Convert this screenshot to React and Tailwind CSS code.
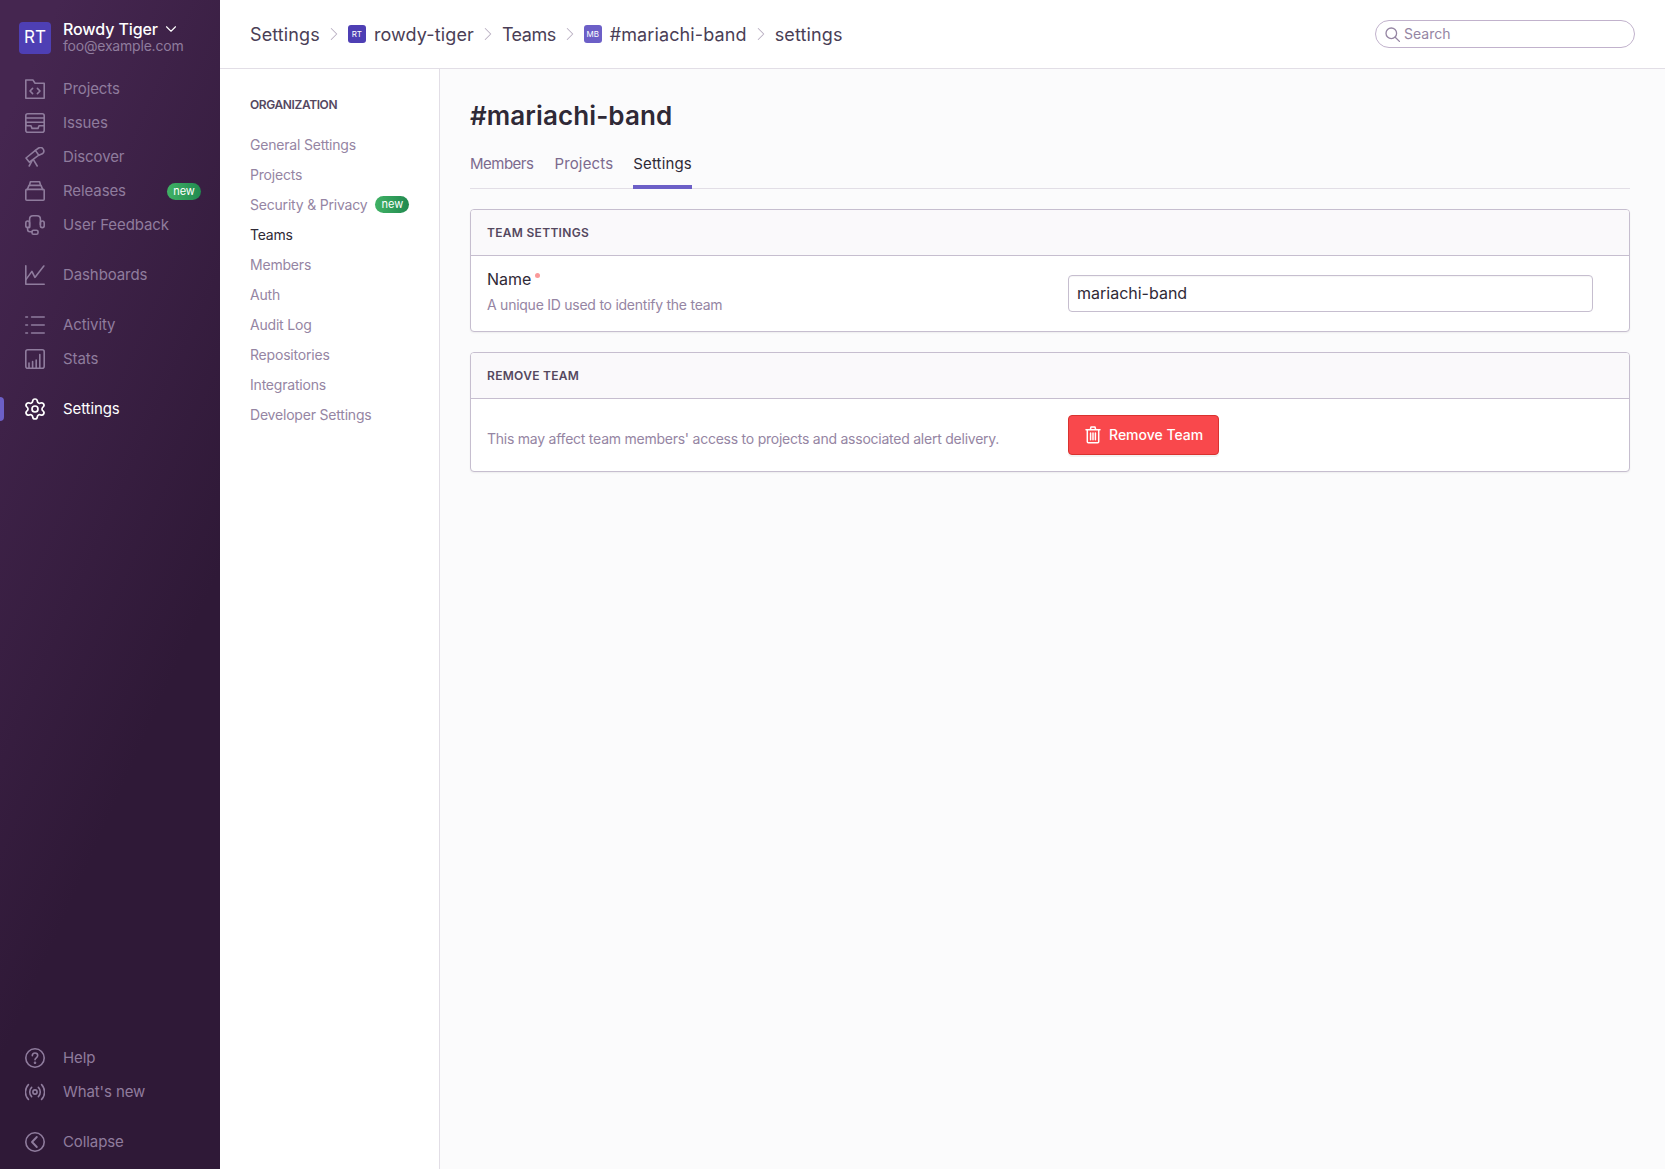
import React from 'react';
import { ChevronDown, ChevronRight, Settings } from 'lucide-react';

const ic = { width: 20, height: 20, viewBox: '0 0 20 20', fill: 'none', stroke: 'currentColor', strokeWidth: 1.6, strokeLinecap: 'round', strokeLinejoin: 'round' };

function ProjectsIcon() {
  return (
    <svg {...ic}>
      <path d="M.8 1h7.100l2.200 3.200h9.100v15H.8z" />
      <path d="M7.600 9.400 5 12l2.600 2.600M12.400 9.400 15 12l-2.600 2.600" />
    </svg>
  );
}
function IssuesIcon() {
  return (
    <svg {...ic}>
      <rect x=".8" y=".8" width="18.400" height="18.400" rx="2" />
      <path d="M.8 5h18.400M.8 9.200h18.400" />
      <path d="M.8 9.200v3.600h5.200l1 2.600h6l1-2.600h5.200" />
    </svg>
  );
}
function DiscoverIcon() {
  return (
    <svg {...ic}>
      <path d="m1 11 9.400-7.600 3.400 4.800-9.400 7z" />
      <path d="m10.400 3.400 3.200-2.400c1.600-1 3.600-.4 4.600 1.200 1 1.600.6 3.600-.9 4.600l-3.500 1.400" />
      <path d="m7.200 13.400-3 5.600M8.400 12.600l3.800 6.400" />
    </svg>
  );
}
function ReleasesIcon() {
  return (
    <svg {...ic}>
      <rect x=".8" y="8.400" width="18.400" height="10.800" rx="1" />
      <path d="M2.400 8.400 4 4.400h12l1.600 4M4.400 4.400 5.400.8h9.200l1 3.600" />
    </svg>
  );
}
function FeedbackIcon() {
  return (
    <svg {...ic}>
      <path d="M4.600 12.600V4.200C4.600 2 6.200.8 8 .8h4c1.800 0 3.400 1.200 3.400 3.400v5.200" />
      <rect x=".8" y="6" width="3.800" height="6.600" rx="1.900" />
      <rect x="15.400" y="6" width="3.800" height="6.600" rx="1.900" />
      <path d="M2.600 12.600v2c0 1.400 1 2.200 2.200 2.200H7" />
      <rect x="7" y="15.200" width="6" height="4" rx="1.400" />
    </svg>
  );
}
function DashboardsIcon() {
  return (
    <svg {...ic}>
      <path d="M.8.800v18.400h18.400" />
      <path d="m.9 14.600 6-8.200 3 6L18.800 1" />
    </svg>
  );
}
function ActivityIcon() {
  return (
    <svg {...ic}>
      <path d="M6.600 2h12.600M6.600 10h12.600M6.600 18h12.600M.8 2h1.700M.8 10h1.700M.8 18h1.700" />
    </svg>
  );
}
function StatsIcon() {
  return (
    <svg {...ic}>
      <rect x=".8" y=".8" width="18.400" height="18.400" rx="2" />
      <path d="M4 19v-5M7.600 19v-6.500M11.200 19v-8M14.800 19V5.500" />
    </svg>
  );
}
function HelpIcon() {
  return (
    <svg {...ic}>
      <circle cx="10" cy="10" r="9.200" />
      <path d="M7.300 7.700c0-1.600 1.200-2.700 2.700-2.700s2.700 1 2.700 2.500c0 2.200-2.700 2.300-2.700 4.300" />
      <circle cx="10" cy="14.700" r=".5" fill="currentColor" />
    </svg>
  );
}
function BroadcastIcon() {
  return (
    <svg {...ic}>
      <circle cx="10" cy="10" r="2.100" />
      <path d="M6.600 5.400c-2.500 2.600-2.500 6.600 0 9.200M13.400 5.400c2.500 2.600 2.500 6.600 0 9.200M3.400 2.600c-4 4.200-4 10.600 0 14.800M16.600 2.600c4 4.200 4 10.600 0 14.800" />
    </svg>
  );
}
function CollapseIcon() {
  return (
    <svg {...ic}>
      <circle cx="10" cy="10" r="9.200" />
      <path d="M11.800 5 7 10l4.800 5" strokeWidth={1.900} />
    </svg>
  );
}
function SearchIcon() {
  return (
    <svg width="15" height="15" viewBox="0 0 15 15" fill="none" stroke="currentColor" strokeWidth="1.300" strokeLinecap="round">
      <circle cx="6.300" cy="6.300" r="5.300" />
      <path d="m10.200 10.200 4.200 4.200" />
    </svg>
  );
}
function TrashIcon() {
  return (
    <svg width="16" height="18" viewBox="0 0 16 18" fill="none" stroke="currentColor" strokeWidth="1.500" strokeLinecap="round" strokeLinejoin="round">
      <path d="M1 3.800h14M5.300 3.800 6 1h4l.7 2.800" />
      <path d="M2.300 3.800v12c0 .6.400 1 1 1h9.400c.6 0 1-.4 1-1v-12" />
      <path d="M5.600 7v6.800M8 7v6.800M10.400 7v6.800" />
    </svg>
  );
}

function NewBadge() {
  return (
    <span className="flex h-[17px] w-[34px] items-center justify-center rounded-full bg-gradient-to-r from-[#40b265] to-[#218a50] text-[11px] leading-none text-white">
      new
    </span>
  );
}

function NavItem({ icon, label, active, badge }) {
  return (
    <div className={`relative flex h-[34px] items-center pl-[25px] pr-[19px] text-[15px] tracking-[-0.1px] ${active ? 'text-white' : 'text-[#8f7c9d]'}`}>
      {active && <span className="absolute left-0 top-[5px] h-6 w-1 rounded-r bg-[#6c5fc7]" />}
      <span className={`mr-[18px] flex h-5 w-5 shrink-0 items-center justify-center ${active ? 'text-white' : 'text-[#8f7c9d]'}`}>{icon}</span>
      <span className="flex-1">{label}</span>
      {badge && <NewBadge />}
    </div>
  );
}

function Crumb({ children, tight }) {
  return <span className={`text-[18px] text-[#4a3e56] ${tight ? 'tracking-[-0.5px]' : 'tracking-[0.12px]'}`}>{children}</span>;
}

function Sep() {
  return <ChevronRight size={22} strokeWidth={1.100} className="mx-[3px] text-[#b9afc2]" />;
}

function Panel({ title, children }) {
  return (
    <div className="mb-5 overflow-hidden rounded border border-[#c6becf] bg-white shadow-[0_1px_2px_rgba(0,0,0,0.06)]">
      <div className="flex h-[46px] items-center border-b border-[#c6becf] bg-[#faf9fb] pl-4 text-[12px] font-semibold uppercase tracking-[0.3px] text-[#55485f]">
        {title}
      </div>
      {children}
    </div>
  );
}

export default function App() {
  const orgLinks = ['General Settings', 'Projects', 'Security & Privacy', 'Teams', 'Members', 'Auth', 'Audit Log', 'Repositories', 'Integrations', 'Developer Settings'];

  return (
    <div className="flex h-[1169px] overflow-hidden bg-[#fbfbfc] font-['Inter',sans-serif]">
      {/* Sidebar */}
      <aside className="flex w-[220px] shrink-0 flex-col bg-[linear-gradient(294deg,#2f1937_36%,#452650_92%)]">
        <div className="flex h-[72px] pl-[19px] pt-[22px]">
          <div className="flex h-8 w-8 items-center justify-center rounded bg-[#4e3fb4] text-[17px] text-white">RT</div>
          <div className="-mt-[2px] ml-3">
            <div className="flex items-center text-[16px] font-medium leading-[18px] tracking-[-0.1px] text-white">
              Rowdy Tiger
              <ChevronDown size={18} strokeWidth={1.500} className="ml-1" />
            </div>
            <div className="text-[14px] leading-[15px] tracking-[-0.2px] text-[#8f7c9d]">foo@example.com</div>
          </div>
        </div>
        <NavItem icon={<ProjectsIcon />} label="Projects" />
        <NavItem icon={<IssuesIcon />} label="Issues" />
        <NavItem icon={<DiscoverIcon />} label="Discover" />
        <NavItem icon={<ReleasesIcon />} label="Releases" badge />
        <NavItem icon={<FeedbackIcon />} label="User Feedback" />
        <div className="mt-4">
          <NavItem icon={<DashboardsIcon />} label="Dashboards" />
        </div>
        <div className="mt-4">
          <NavItem icon={<ActivityIcon />} label="Activity" />
          <NavItem icon={<StatsIcon />} label="Stats" />
        </div>
        <div className="mt-4">
          <NavItem icon={<Settings size={24} strokeWidth={1.700} className="shrink-0" />} label="Settings" active />
        </div>
        <div className="mt-auto pb-[10px]">
          <NavItem icon={<HelpIcon />} label="Help" />
          <NavItem icon={<BroadcastIcon />} label="What's new" />
          <div className="mt-4">
            <NavItem icon={<CollapseIcon />} label="Collapse" />
          </div>
        </div>
      </aside>

      <div className="flex min-w-0 flex-1 flex-col">
        {/* Header */}
        <header className="flex h-[69px] shrink-0 items-center justify-between border-b border-[#e2dee6] bg-white pl-[30px] pr-[30px]">
          <div className="flex items-center">
            <Crumb>Settings</Crumb>
            <Sep />
            <span className="mr-2 flex h-[18px] w-[18px] items-center justify-center rounded-[3px] bg-[#4e3fb4] text-[8px] text-white">RT</span>
            <Crumb>rowdy-tiger</Crumb>
            <Sep />
            <Crumb tight>Teams</Crumb>
            <Sep />
            <span className="mr-2 flex h-[18px] w-[18px] items-center justify-center rounded-[3px] bg-[#6c5fc7] text-[8px] text-white">MB</span>
            <Crumb>#mariachi-band</Crumb>
            <Sep />
            <Crumb>settings</Crumb>
          </div>
          <div className="flex h-[28px] w-[260px] items-center rounded-full border border-[#c1b2cc] bg-white pl-[9px] text-[14px] text-[#9585a3]">
            <span className="mr-1 flex"><SearchIcon /></span>
            <span className="pb-px">Search</span>
          </div>
        </header>

        <div className="flex min-h-0 flex-1">
          {/* Settings nav */}
          <nav className="w-[220px] shrink-0 border-r border-[#e2dee6] bg-white pl-[30px] pt-[29px]">
            <div className="mb-[17px] text-[12px] font-semibold uppercase leading-[14px] tracking-[-0.4px] text-[#55485f]">Organization</div>
            {orgLinks.map(link => (
              <div key={link} className={`flex h-[30px] items-center text-[14px] tracking-[-0.2px] ${link === 'Teams' ? 'text-[#2f2936]' : 'text-[#9585a3]'}`}>
                {link}
                {link === 'Security & Privacy' && <span className="ml-2 mt-px tracking-normal"><NewBadge /></span>}
              </div>
            ))}
          </nav>

          {/* Content */}
          <main className="min-w-0 flex-1 pl-[30px] pr-[35px] pt-[29px]">
            <h1 className="text-[26px] font-semibold leading-[36px] tracking-[0.1px] text-[#2f2936]">#mariachi-band</h1>
            <div className="mb-5 mt-5 flex border-b border-[#e2dee6] text-[15px] text-[#7c6a8e]">
              <span className="mr-[21px] pb-[14px] leading-[20px] tracking-[-0.5px]">Members</span>
              <span className="mr-5 pb-[14px] leading-[20px] tracking-[0.15px]">Projects</span>
              <span className="-mb-px border-b-4 border-[#6c5fc7] pb-[11px] leading-[20px] tracking-[0.15px] text-[#2f2936]">Settings</span>
            </div>

            <Panel title="Team Settings">
              <div className="flex h-[75px] pl-4">
                <div className="w-[581px] shrink-0 pr-4 pt-3">
                  <div className="flex text-[16px] leading-[22px] text-[#2f2936]">
                    Name
                    <span className="ml-1 mt-[5px] h-[5px] w-[5px] rounded-full bg-[#fa9a9a]" />
                  </div>
                  <div className="mt-[6px] text-[14px] leading-[18px] tracking-[-0.25px] text-[#9585a3]">A unique ID used to identify the team</div>
                </div>
                <div className="mt-[19px] flex h-[37px] w-[525px] items-center rounded border border-[#c6becf] bg-white pb-px pl-2 text-[16px] text-[#2f2936] shadow-[inset_0_1px_1px_rgba(0,0,0,0.04)]">
                  mariachi-band
                </div>
              </div>
            </Panel>

            <Panel title="Remove Team">
              <div className="flex h-[72px] items-center pl-4">
                <div className="w-[581px] shrink-0 pr-2 pt-[6px] text-[14px] tracking-[-0.24px] text-[#9585a3]">
                  This may affect team members' access to projects and associated alert delivery.
                </div>
                <button className="flex h-10 w-[151px] items-center rounded border border-[#d9322f] bg-[#f9484c] pl-4 text-[14px] font-medium text-white shadow-[0_2px_0_rgba(0,0,0,0.05)]">
                  <span className="mr-2 flex"><TrashIcon /></span>
                  <span className="pb-[2px]">Remove Team</span>
                </button>
              </div>
            </Panel>
          </main>
        </div>
      </div>
    </div>
  );
}
